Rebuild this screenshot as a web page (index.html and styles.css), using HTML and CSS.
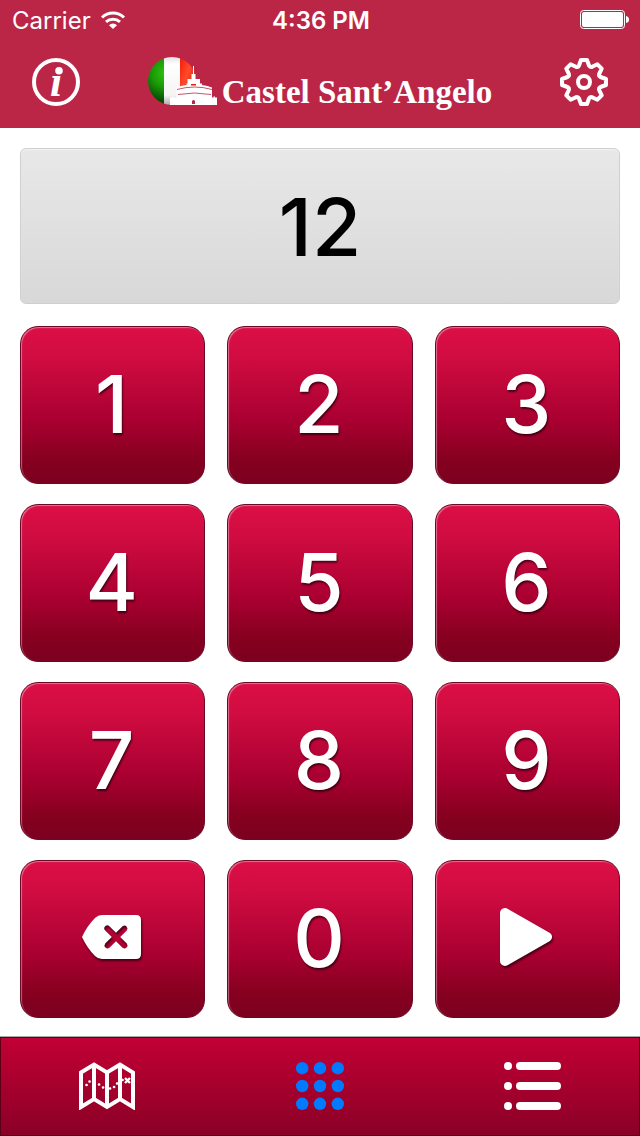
FILE: index.html
```html
<!DOCTYPE html>
<html lang="en">

<head>
    <meta charset="UTF-8">
    <meta name="viewport" content="width=device-width, initial-scale=1">
    <title>Castel Sant’Angelo</title>
    <link rel="stylesheet" href="styles.css">
</head>

<body>
    <header class="header">
        <div class="status">
            <div class="carrier">
                <span>Carrier</span>
                <svg width="26" height="18" viewBox="0 0 26 18">
                    <path d="M2 6.500A16 16 0 0 1 24 6.500" fill="none" stroke="#fff" stroke-width="3"/>
                    <path d="M6 10.800A10.500 10.500 0 0 1 20 10.800" fill="none" stroke="#fff" stroke-width="3"/>
                    <path d="M13 18L9 14.200A5.600 5.600 0 0 1 17 14.200Z" fill="#fff"/>
                </svg>
            </div>
            <time class="time">4:36 PM</time>
            <svg class="battery" width="50" height="20" viewBox="0 0 50 20">
                <rect x="0.500" y="0.500" width="44" height="18" rx="3" fill="none" stroke="#fff"/>
                <rect x="2" y="2" width="41" height="15" rx="2" fill="#fff"/>
                <path d="M46 6q3 .5 3 3.500t-3 3.500z" fill="#fff"/>
            </svg>
        </div>
        <div class="bar">
            <button class="icon-btn" type="button" aria-label="Info">
                <svg width="48" height="48" viewBox="0 0 48 48">
                    <circle cx="24" cy="24" r="22" fill="none" stroke="#fff" stroke-width="4"/>
                    <circle cx="27" cy="12.700" r="3.800" fill="#fff"/>
                    <text class="info-i" x="24" y="38" text-anchor="middle">ı</text>
                </svg>
            </button>
            <h1 class="logo">
                <svg width="70" height="50" viewBox="0 0 70 50">
                    <defs>
                        <clipPath id="ball"><circle cx="24" cy="24" r="24"/></clipPath>
                        <radialGradient id="green" gradientUnits="userSpaceOnUse" cx="18" cy="16" r="28">
                            <stop offset="0" stop-color="#2fc410"/>
                            <stop offset=".5" stop-color="#1b9a08"/>
                            <stop offset="1" stop-color="#054c03"/>
                        </radialGradient>
                        <linearGradient id="red" x1="0" y1="0" x2="1" y2="1">
                            <stop offset="0" stop-color="#f21c08"/>
                            <stop offset=".4" stop-color="#ff4a2c"/>
                            <stop offset="1" stop-color="#b00c05"/>
                        </linearGradient>
                        <linearGradient id="white" x1="0" y1="0" x2="0" y2="1">
                            <stop offset="0" stop-color="#e2e2e2"/>
                            <stop offset=".15" stop-color="#fff"/>
                            <stop offset=".8" stop-color="#f4f4f4"/>
                            <stop offset="1" stop-color="#aaa"/>
                        </linearGradient>
                    </defs>
                    <g clip-path="url(#ball)">
                        <rect width="16" height="48" fill="url(#green)"/>
                        <rect x="16" width="16" height="48" fill="url(#white)"/>
                        <rect x="32" width="16" height="48" fill="url(#red)"/>
                    </g>
                    <g fill="#fff">
                        <path d="M45 9h1v9h-1z"/>
                        <path d="M43.500 17h4v5h4.500v4.500h2v1.500q6 .5 10 2.500v10h1.500v-1h1.500v1h2v7.500H22V40.500h2v-1h1.500v1h3v-10q4-2 10-2.500v-1.500h1V22h4z"/>
                    </g>
                    <path d="M29 32.500q17.500-5 35 0M30 37.500q16.500-3 33 0" fill="none" stroke="#bb2647" stroke-width=".8"/>
                    <path d="M43 27h5v1.500h-5z" fill="#e0200d"/>
                    <path d="M44 47v-3q1.500-2 3 0v3z" fill="#bb2647"/>
                </svg>
                <span class="logo-text">Castel Sant’Angelo</span>
            </h1>
            <button class="icon-btn" type="button" aria-label="Settings">
                <svg width="48" height="48" viewBox="-24 -24 48 48" fill="none" stroke="#fff" stroke-width="4" stroke-linejoin="round">
                    <path d="M-3-22H3L5-16.500Q6.500-14.500 8.100-15.200L13.400-17.700L17.700-13.400L15.200-8.100Q14.500-6 16.500-5L22-3V3L16.500 5Q14.500 6 15.200 8.100L17.700 13.400L13.400 17.700L8.100 15.200Q6 14.500 5 16.500L3 22H-3L-5 16.500Q-6 14.500-8.100 15.200L-13.400 17.700L-17.700 13.400L-15.200 8.100Q-14.500 6-16.500 5L-22 3V-3L-16.500-5Q-14.500-6-15.200-8.100L-17.700-13.400L-13.400-17.700L-8.100-15.200Q-6-14.500-5-16.500Z"/>
                    <circle r="6"/>
                </svg>
            </button>
        </div>
    </header>

    <main class="main">
        <output class="display" id="display">12</output>
        <div class="keys" id="keys">
            <button class="key" type="button">1</button>
            <button class="key" type="button">2</button>
            <button class="key" type="button">3</button>
            <button class="key" type="button">4</button>
            <button class="key" type="button">5</button>
            <button class="key" type="button">6</button>
            <button class="key" type="button">7</button>
            <button class="key" type="button">8</button>
            <button class="key" type="button">9</button>
            <button class="key" type="button" id="del" aria-label="Delete">
                <svg width="60" height="44" viewBox="0 0 60 44">
                    <path fill="#fff" fill-rule="evenodd" d="M20 0H54Q59 0 59 5V39Q59 44 54 44H20Q16 44 13 41Q5 33 0 22Q5 11 13 3Q16 0 20 0ZM23.200 11.200a3 3 0 0 0 0 4.200L29.800 22l-6.600 6.600a3 3 0 0 0 4.200 4.200L34 26.200l6.600 6.600a3 3 0 0 0 4.200-4.200L38.200 22l6.600-6.600a3 3 0 0 0-4.200-4.200L34 17.800l-6.600-6.600a3 3 0 0 0-4.200 0Z"/>
                </svg>
            </button>
            <button class="key" type="button">0</button>
            <button class="key" type="button" id="play" aria-label="Play">
                <svg width="54" height="60" viewBox="0 0 54 60">
                    <path d="M6 6V54L48 30Z" fill="#fff" stroke="#fff" stroke-width="10" stroke-linejoin="round"/>
                </svg>
            </button>
        </div>
    </main>

    <nav class="tabs">
        <a href="#map" aria-label="Map">
            <svg width="56" height="48" viewBox="0 0 56 48" fill="none" stroke="#fff">
                <path d="M2 10.500L15 2.500L28 10.500L41 2.500L54 10.500V45L41 37L28 45L15 37L2 45ZM15 2.500V37M28 10.500V45M41 2.500V37" stroke-width="4"/>
                <path d="M7.500 23h.1M10.500 19.500h.1M20 22.500h.1M24 25.500h.1M31 26.500h.1M35 25h.1M38 21.500h.1M43.500 18h.1" stroke-width="2.600" stroke-linecap="round"/>
                <path d="M46 16l5 5M51 16l-5 5" stroke-width="2.400"/>
            </svg>
        </a>
        <a href="#keypad" class="active" aria-label="Keypad" aria-current="page">
            <svg width="48" height="48" viewBox="0 0 48 48" fill="currentColor">
                <circle cx="6.200" cy="6.200" r="6.200"/>
                <circle cx="24" cy="6.200" r="6.200"/>
                <circle cx="41.800" cy="6.200" r="6.200"/>
                <circle cx="6.200" cy="24" r="6.200"/>
                <circle cx="24" cy="24" r="6.200"/>
                <circle cx="41.800" cy="24" r="6.200"/>
                <circle cx="6.200" cy="41.800" r="6.200"/>
                <circle cx="24" cy="41.800" r="6.200"/>
                <circle cx="41.800" cy="41.800" r="6.200"/>
            </svg>
        </a>
        <a href="#list" aria-label="List">
            <svg width="57" height="48" viewBox="0 0 57 48" fill="currentColor">
                <circle cx="4" cy="4" r="4"/>
                <rect x="12" y="0" width="45" height="8" rx="4"/>
                <circle cx="4" cy="24" r="4"/>
                <rect x="12" y="20" width="45" height="8" rx="4"/>
                <circle cx="4" cy="44" r="4"/>
                <rect x="12" y="40" width="45" height="8" rx="4"/>
            </svg>
        </a>
    </nav>
    <script>
        var display = document.getElementById('display');
        var keys = document.getElementById('keys').getElementsByTagName('button');

        for (var i = 0; i < keys.length; i++) {
            keys[i].onclick = function () {
                if (this.id == 'del') {
                    display.textContent = display.textContent.slice(0, -1);
                } else if (this.id != 'play' && display.textContent.length < 4) {
                    display.textContent += this.textContent;
                }
            }
        }
    </script>
</body>
</html>
```
FILE: styles.css
```css
* {
    margin: 0;
    padding: 0;
    box-sizing: border-box;
}
body {
    min-height: 100vh;
    display: flex;
    flex-direction: column;
    background: #fff;
    font-family: Inter, "Liberation Sans", sans-serif;
}
svg {
    display: block;
}
button {
    border: 0;
    background: none;
    color: #fff;
    font-family: inherit;
    cursor: pointer;
}

.header {
    background: #bb2647;
    color: #fff;
}
.status {
    height: 40px;
    padding: 0 10px 0 12px;
    display: grid;
    grid-template-columns: 1fr auto 1fr;
    align-items: center;
    font-size: 24px;
}
.carrier {
    display: flex;
    align-items: center;
    gap: 9px;
}
.time {
    font-weight: 600;
}
.battery {
    justify-self: end;
}
.bar {
    height: 88px;
    padding: 0 32px 4px;
    display: flex;
    align-items: center;
    justify-content: space-between;
}
.info-i {
    fill: #fff;
    font: italic bold 44px "Liberation Serif", serif;
}
.logo {
    display: flex;
    align-items: center;
    gap: 4px;
}
.logo-text {
    padding-top: 20px;
    font: bold 33px/36px "Liberation Serif", serif;
    white-space: nowrap;
}

.main {
    flex: 1;
    padding: 20px 20px 19px;
    display: flex;
    flex-direction: column;
    gap: 22px;
}
.display {
    height: 156px;
    display: flex;
    align-items: center;
    justify-content: center;
    border: 1px solid #cfcfcf;
    border-radius: 6px;
    background: linear-gradient(#e8e8e8, #d8d8d8);
    box-shadow: inset 0 1px 1px #f4f4f4;
    color: #000;
    font-size: 80px;
    font-weight: 500;
}
.keys {
    flex: 1;
    display: grid;
    grid-template-columns: repeat(3, 1fr);
    grid-auto-rows: 1fr;
    gap: 20px 22px;
}
.key {
    min-height: 120px;
    padding: 0 2px 4px 0;
    display: flex;
    align-items: center;
    justify-content: center;
    border: 1px solid #6b0a25;
    border-radius: 18px;
    background: linear-gradient(#db0f46, #d00c41 20%, #a90031 60%, #86001f 85%, #7c0020);
    box-shadow: inset 1px 1px 1px rgba(255, 255, 255, .4);
    font-size: 80px;
    font-weight: 500;
    text-shadow: 1px 2px 2px rgba(0, 0, 0, .6);
}
.key svg {
    filter: drop-shadow(1px 2px 1px rgba(0, 0, 0, .6));
}

.tabs {
    height: 99px;
    padding-bottom: 2px;
    display: grid;
    grid-template-columns: repeat(3, 1fr);
    border: 1px solid #5c0018;
    background: linear-gradient(#c20035, #8a0026);
    box-shadow: 0 -1px 0 #aaa;
}
.tabs a {
    display: flex;
    align-items: center;
    justify-content: center;
    color: #fff;
}
.tabs .active {
    color: #007aff;
}
```
